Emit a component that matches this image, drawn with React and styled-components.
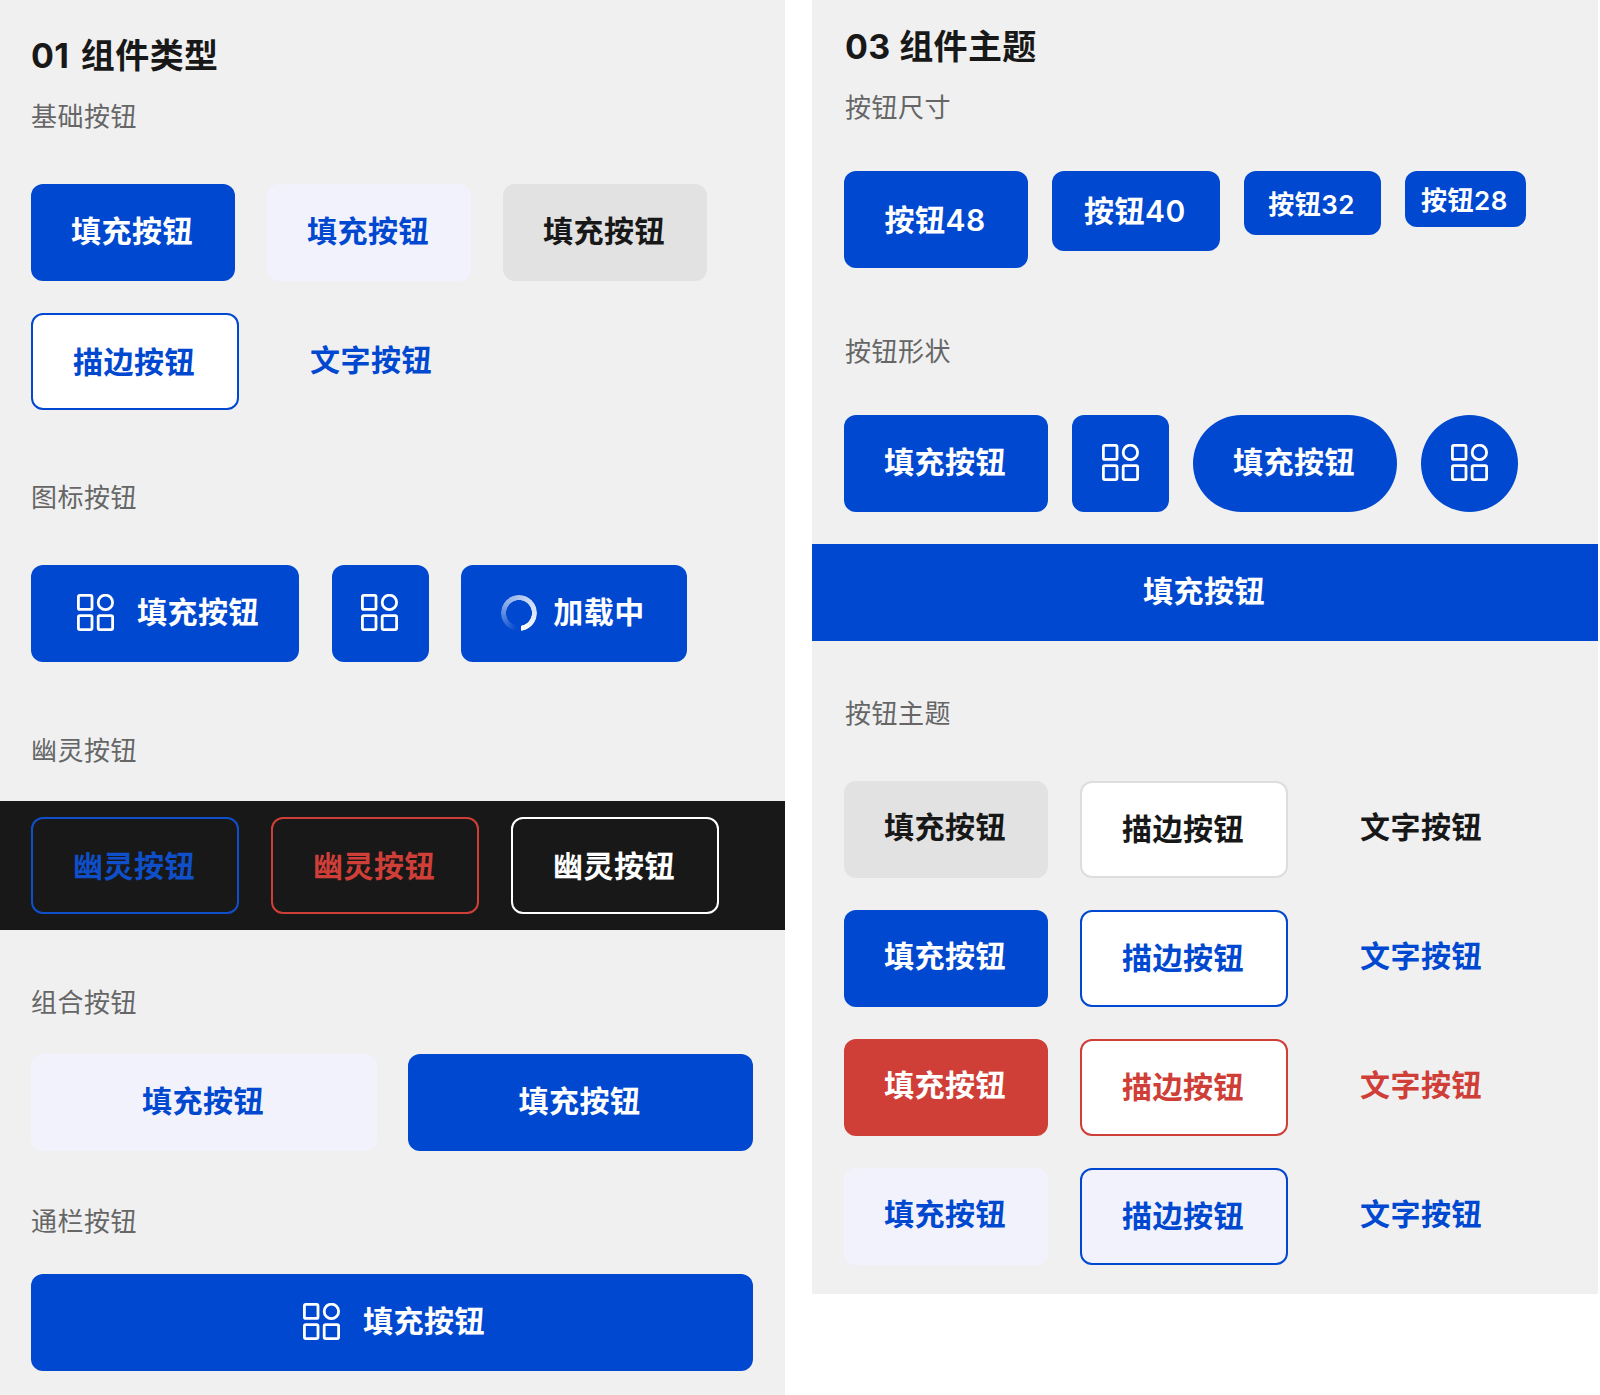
import React from 'react';
import styled, { createGlobalStyle, css } from 'styled-components';

const BLUE = '#0048d0';
const RED = '#cf3f38';
const TINT = '#f2f2fc';
const INK = '#181818';

const Global = createGlobalStyle`
  html, body { margin: 0; padding: 0; background: #fff; }
  * { box-sizing: border-box; }
  body { font-family: Inter, "Noto Sans CJK SC", sans-serif; }
`;

const Page = styled.div`
  width: 1600px;
  height: 1395px;
  display: flex;
  gap: 27px;
  align-items: flex-start;
  overflow: hidden;
`;

const Panel = styled.section`
  flex: none;
  width: ${p => p.$width}px;
  height: ${p => p.$height}px;
  padding-top: ${p => p.$top}px;
  background: #f0f0f1;
  overflow: hidden;
`;

const Inset = styled.div`
  padding-left: ${p => p.$left}px;
`;

const Heading = styled.h1`
  margin: 0;
  padding-left: ${p => p.$left}px;
  font-size: 34px;
  line-height: 48px;
  font-weight: 700;
  letter-spacing: 0.4px;
  word-spacing: ${p => p.$word ?? 0}px;
  color: ${INK};
`;

const Label = styled.h2`
  margin: ${p => p.$above}px 0 ${p => p.$below}px;
  padding-left: ${p => p.$left}px;
  font-size: 26px;
  line-height: 36px;
  font-weight: 400;
  letter-spacing: 0.5px;
  color: #666;
`;

const Row = styled.div`
  display: flex;
  align-items: flex-start;
  gap: ${p => p.$gap ?? 32}px;
  margin-top: ${p => p.$above ?? 0}px;
`;

const Band = styled.div`
  display: flex;
  gap: 32px;
  padding: 16px 31px;
  background: ${INK};
`;

const tones = {
  primary: css`background: ${BLUE}; color: #fff;`,
  danger: css`background: ${RED}; color: #fff;`,
  tint: css`background: ${TINT}; color: ${BLUE};`,
  neutral: css`background: #e2e2e2; color: ${INK};`,
  outline: css`background: #fff; color: ${BLUE}; border: 2px solid ${BLUE};`,
  outlineDanger: css`background: #fff; color: ${RED}; border: 2px solid ${RED};`,
  outlineNeutral: css`background: #fff; color: ${INK}; border: 2px solid #ddd;`,
  outlineTint: css`background: ${TINT}; color: ${BLUE}; border: 2px solid ${BLUE};`,
  ghostBlue: css`background: transparent; color: #0f4fc9; border: 2px solid #0f4fc9;`,
  ghostRed: css`background: transparent; color: ${RED}; border: 2px solid ${RED};`,
  ghostWhite: css`background: transparent; color: #fff; border: 2px solid #fff;`,
  text: css`background: transparent; color: ${BLUE};`,
  textDanger: css`background: transparent; color: ${RED};`,
  textNeutral: css`background: transparent; color: ${INK};`,
};

const Button = styled.button`
  flex: none;
  display: inline-flex;
  align-items: center;
  justify-content: center;
  gap: ${p => p.$gap ?? 0}px;
  width: ${p => (p.$width ? `${p.$width}px` : '100%')};
  height: ${p => p.$height ?? 97}px;
  padding: ${p => p.$drop ?? 0}px 2px ${p => p.$rise ?? 4}px ${p => p.$indent ?? 0}px;
  border: 0;
  border-radius: ${p => p.$radius ?? 12}px;
  font-family: inherit;
  font-size: ${p => p.$font ?? 30}px;
  font-weight: 600;
  letter-spacing: 0.5px;
  line-height: 1;
  ${p => tones[p.$tone ?? 'primary']}
`;

const Banner = styled(Button)`
  border-radius: 0;
  margin-top: 32px;
`;

const Spinner = styled.span`
  display: block;
  flex: none;
  width: 36px;
  height: 36px;
  margin-top: 2px;
  border-radius: 50%;
  background: conic-gradient(from 188deg, rgba(255,255,255,0) 0deg, rgba(255,255,255,0.55) 120deg, rgba(255,255,255,0.8) 220deg, #fff 345deg, rgba(255,255,255,0) 345.5deg);
  -webkit-mask: radial-gradient(circle, transparent 12.6px, #000 13.1px);
  mask: radial-gradient(circle, transparent 12.6px, #000 13.1px);
`;

const IconSvg = styled.svg`
  flex: none;
  margin-top: 2px;
`;

const GridIcon = () => (
  <IconSvg width="37" height="37" viewBox="0 0 37 37" fill="none" stroke="currentColor" strokeWidth="2.8">
    <rect x="1.4" y="1.4" width="13.6" height="14" rx="1.5" />
    <circle cx="28.4" cy="8.4" r="7.2" />
    <rect x="1.4" y="21.6" width="13.6" height="14" rx="1.5" />
    <rect x="21.2" y="21.6" width="14.4" height="14" rx="1.5" />
  </IconSvg>
);

const themeRows = [
  ['neutral', 'outlineNeutral', 'textNeutral'],
  ['primary', 'outline', 'text'],
  ['danger', 'outlineDanger', 'textDanger'],
  ['tint', 'outlineTint', 'text'],
];

export default function App() {
  return (
    <>
      <Global />
      <Page>
        <Panel $width={785} $height={1395} $top={32}>
          <Heading $left={31} $word={3}>01 组件类型</Heading>
          <Label $left={31} $above={19} $below={49}>基础按钮</Label>
          <Inset $left={31}>
            <Row>
              <Button $width={204}>填充按钮</Button>
              <Button $width={204} $tone="tint">填充按钮</Button>
              <Button $width={204} $tone="neutral">填充按钮</Button>
            </Row>
            <Row $above={32} $gap={31}>
              <Button $width={208} $tone="outline" $rise={0}>描边按钮</Button>
              <Button $width={204} $tone="text">文字按钮</Button>
            </Row>
          </Inset>
          <Label $left={31} $above={70} $below={49}>图标按钮</Label>
          <Inset $left={31}>
            <Row $gap={32.5}>
              <Button $width={268} $gap={23} $indent={8}><GridIcon />填充按钮</Button>
              <Button $width={97}><GridIcon /></Button>
              <Button $width={226} $gap={16}><Spinner />加载中</Button>
            </Row>
          </Inset>
          <Label $left={31} $above={71} $below={32}>幽灵按钮</Label>
          <Band>
            <Button $width={208} $tone="ghostBlue" $rise={0}>幽灵按钮</Button>
            <Button $width={208} $tone="ghostRed" $rise={0}>幽灵按钮</Button>
            <Button $width={208} $tone="ghostWhite" $rise={0}>幽灵按钮</Button>
          </Band>
          <Label $left={31} $above={55} $below={33}>组合按钮</Label>
          <Inset $left={31}>
            <Row $gap={31}>
              <Button $width={346} $tone="tint">填充按钮</Button>
              <Button $width={345}>填充按钮</Button>
            </Row>
          </Inset>
          <Label $left={31} $above={53} $below={34}>通栏按钮</Label>
          <Inset $left={31}>
            <Button $width={722} $gap={23} $indent={6}><GridIcon />填充按钮</Button>
          </Inset>
        </Panel>

        <Panel $width={786} $height={1294} $top={23}>
          <Heading $left={33}>03 组件主题</Heading>
          <Label $left={33} $above={19} $below={45}>按钮尺寸</Label>
          <Inset $left={32}>
            <Row $gap={24}>
              <Button $width={184} $rise={0}>按钮48</Button>
              <Button $width={168} $height={80} $rise={0}>按钮40</Button>
              <Button $width={137} $height={64} $font={26} $drop={4} $rise={0}>按钮32</Button>
              <Button $width={121} $height={56} $font={26} $drop={4} $rise={0}>按钮28</Button>
            </Row>
          </Inset>
          <Label $left={33} $above={66} $below={45}>按钮形状</Label>
          <Inset $left={32}>
            <Row $gap={24}>
              <Button $width={204}>填充按钮</Button>
              <Button $width={97} $indent={2}><GridIcon /></Button>
              <Button $width={204} $radius={49}>填充按钮</Button>
              <Button $width={97} $radius={49} $indent={2}><GridIcon /></Button>
            </Row>
          </Inset>
          <Banner>填充按钮</Banner>
          <Label $left={33} $above={55} $below={49}>按钮主题</Label>
          <Inset $left={32}>
            {themeRows.map(([fill, outline, text], i) => (
              <Row key={fill + text} $above={i ? 32 : 0} $gap={32}>
                <Button $width={204} $tone={fill} $rise={5}>填充按钮</Button>
                <Button $width={208} $tone={outline} $rise={2}>描边按钮</Button>
                <Button $width={204} $tone={text} $rise={5}>文字按钮</Button>
              </Row>
            ))}
          </Inset>
        </Panel>
      </Page>
    </>
  );
}
